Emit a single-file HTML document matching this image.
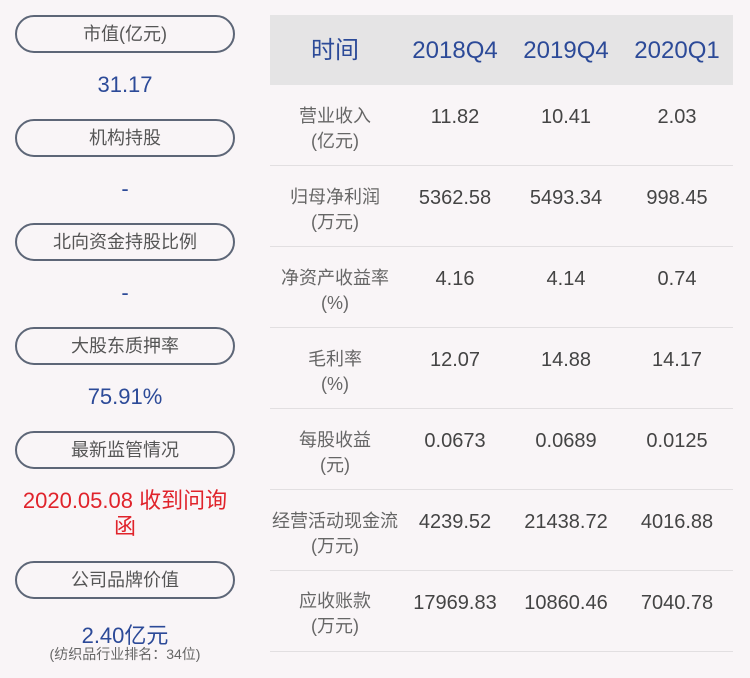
<!DOCTYPE html>
<html><head><meta charset="utf-8"><style>
body{margin:0;width:750px;height:678px;background:#f9f5f7;font-family:"Liberation Sans","Noto Sans CJK SC",sans-serif;position:relative;overflow:hidden}
.pill{position:absolute;left:15px;width:216px;height:34px;border:2px solid #5d6677;border-radius:19px;text-align:center;line-height:34px;font-size:18px;color:#555}
.v{position:absolute;left:15px;width:220px;text-align:center;font-size:22px;color:#2c4a98}
.t{position:absolute;left:270px;width:463px}
.hd{top:15px;height:70px;background:#e5e4e5}
.c{position:absolute;text-align:center;width:110px}
.hd .c{top:21px;font-size:24px;color:#2c4a98;line-height:30px}
.row{height:80px;border-bottom:1px solid #e2dfe1}
.row .c{top:20px;font-size:20px;color:#444;line-height:24px}
.row .l{left:0;width:130px;font-size:18px;color:#666;line-height:25px;top:19px}
</style></head><body>
<div class="pill" style="top:15px">市值(亿元)</div>
<div class="v" style="top:72px">31.17</div>
<div class="pill" style="top:119px">机构持股</div>
<div class="v" style="top:176px">-</div>
<div class="pill" style="top:223px">北向资金持股比例</div>
<div class="v" style="top:280px">-</div>
<div class="pill" style="top:327px">大股东质押率</div>
<div class="v" style="top:384px">75.91%</div>
<div class="pill" style="top:431px">最新监管情况</div>
<div class="v" style="top:488px;color:#e0232b;line-height:26px;left:20px;width:210px">2020.05.08 收到问询函</div>
<div class="pill" style="top:561px">公司品牌价值</div>
<div class="v" style="top:618px">2.40亿元</div>
<div class="v" style="top:644px;font-size:14px;color:#666">(纺织品行业排名：34位)</div>

<div class="t hd"><div class="c" style="left:10px">时间</div><div class="c" style="left:130px">2018Q4</div><div class="c" style="left:241px">2019Q4</div><div class="c" style="left:352px">2020Q1</div></div>
<div class="t" style="top:85px">
<div class="row" style="position:relative"><div class="c l">营业收入<br>(亿元)</div><div class="c" style="left:130px">11.82</div><div class="c" style="left:241px">10.41</div><div class="c" style="left:352px">2.03</div></div>
<div class="row" style="position:relative"><div class="c l">归母净利润<br>(万元)</div><div class="c" style="left:130px">5362.58</div><div class="c" style="left:241px">5493.34</div><div class="c" style="left:352px">998.45</div></div>
<div class="row" style="position:relative"><div class="c l">净资产收益率<br>(%)</div><div class="c" style="left:130px">4.16</div><div class="c" style="left:241px">4.14</div><div class="c" style="left:352px">0.74</div></div>
<div class="row" style="position:relative"><div class="c l">毛利率<br>(%)</div><div class="c" style="left:130px">12.07</div><div class="c" style="left:241px">14.88</div><div class="c" style="left:352px">14.17</div></div>
<div class="row" style="position:relative"><div class="c l">每股收益<br>(元)</div><div class="c" style="left:130px">0.0673</div><div class="c" style="left:241px">0.0689</div><div class="c" style="left:352px">0.0125</div></div>
<div class="row" style="position:relative"><div class="c l">经营活动现金流<br>(万元)</div><div class="c" style="left:130px">4239.52</div><div class="c" style="left:241px">21438.72</div><div class="c" style="left:352px">4016.88</div></div>
<div class="row" style="position:relative"><div class="c l" style="top:18px">应收账款<br>(万元)</div><div class="c" style="left:130px">17969.83</div><div class="c" style="left:241px">10860.46</div><div class="c" style="left:352px">7040.78</div></div>
</div>
</body></html>
